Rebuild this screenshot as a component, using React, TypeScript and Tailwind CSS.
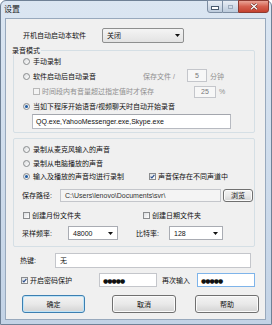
import React from "react";

const Radio = ({ checked = false }: { checked?: boolean }) => (
  <span className="w-[7px] h-[7px] shrink-0 rounded-full border border-[#8a8c8e] bg-gradient-to-br from-[#d9dbdd] to-[#ffffff] flex items-center justify-center">
    {checked && <span className="w-[3px] h-[3px] rounded-full bg-[#1d5aa3]" />}
  </span>
);

const Check = ({ checked = false, disabled = false }: { checked?: boolean; disabled?: boolean }) => (
  <span
    className={`w-[7px] h-[7px] shrink-0 border ${disabled ? "border-[#b9b9b9] bg-[#f4f4f4]" : "border-[#8a8c8e] bg-gradient-to-br from-[#dcdee0] to-[#ffffff]"} flex items-center justify-center`}
  >
    {checked && (
      <svg width="5" height="5" viewBox="0 0 5 5">
        <path d="M0.6 2.6 L1.9 3.9 L4.4 0.8" fill="none" stroke="#2c4f8c" strokeWidth="1.2" />
      </svg>
    )}
  </span>
);

const Arrow = () => (
  <svg width="5" height="3" viewBox="0 0 5 3" className="shrink-0">
    <path d="M0 0 H5 L2.5 3 Z" fill="#111" />
  </svg>
);

const Btn = ({ label, w, primary = false, h = "h-[18px]" }: { label: string; w: string; primary?: boolean; h?: string }) => (
  <div
    className={`${w} ${h} shrink-0 rounded-[3px] border ${primary ? "border-[#3c7fb1] shadow-[inset_0_0_0_1px_#bfe4f8]" : "border-[#707070] shadow-[inset_0_0_0_1px_#fbfbfb]"} bg-gradient-to-b from-[#f3f3f3] via-[#e9e9e9] to-[#d3d3d3] flex items-center justify-center`}
  >
    {label}
  </div>
);

export default function App() {
  return (
    <div className="w-[272px] h-[325px] font-['Liberation_Sans','Noto_Sans_CJK_SC',sans-serif] text-[7px] leading-[9px] text-[#111]">
      <div className="w-[272px] h-[325px] rounded-t-[6px] border border-[#6f8196] bg-gradient-to-b from-[#dbe6f2] to-[#c3d3e6] flex flex-col">
        {/* title bar */}
        <div className="h-[17px] flex items-start shrink-0">
          <span className="pl-[3px] pt-[4px] text-[8px] leading-[9px] text-[#1b1b1b]">设置</span>
          <div className="ml-auto mr-[2px] -mt-[1px] flex h-[13px]">
            <div className="w-[16px] h-[13px] rounded-bl-[3px] border border-[#7d8ea3] bg-gradient-to-b from-[#e9eef5] to-[#bccbdc] flex items-center justify-center">
              <span className="mt-[2px] w-[6px] h-[2px] bg-white border border-[#4a5a6e] box-content" />
            </div>
            <div className="w-[15px] h-[13px] border-y border-[#7d8ea3] bg-gradient-to-b from-[#e9eef5] to-[#bccbdc] flex items-center justify-center">
              <span className="w-[5px] h-[4px] border border-[#9eacbd]" />
            </div>
            <div className="w-[31px] h-[13px] rounded-br-[3px] border border-[#8d3b32] bg-gradient-to-b from-[#e9a497] via-[#d5604f] to-[#c4412f] flex items-center justify-center">
              <svg width="8" height="7" viewBox="0 0 8 7">
                <path d="M1 0.8 L7 6.2 M7 0.8 L1 6.2" stroke="#5c1f18" strokeWidth="2.4" />
                <path d="M1 0.8 L7 6.2 M7 0.8 L1 6.2" stroke="#ffffff" strokeWidth="1.4" />
              </svg>
            </div>
          </div>
        </div>

        {/* client */}
        <div className="ml-[4px] w-[261px] h-[302px] border border-[#98a9bd] bg-[#f0f0f0] flex flex-col">
          {/* row 1 */}
          <div className="mt-[9px] h-[15px] flex items-center pl-[17px]">
            <span className="w-[79px]">开机自动启动本软件</span>
            <div className="w-[82px] h-[15px] rounded-[2px] border border-[#8e8f8f] bg-gradient-to-b from-[#f4f4f4] to-[#e3e3e3] flex items-center pl-[4px] pr-[3px]">
              <span className="flex-1">关闭</span>
              <Arrow />
            </div>
          </div>

          {/* group 1 */}
          <div className="relative mt-[7px] ml-[7px] w-[242px] h-[83px] rounded-[2px] border border-[#d5dfe5] flex flex-col pt-[3px]">
            <span className="absolute left-[-2px] -top-[5px] bg-[#f0f0f0] pr-[1px]">录音模式</span>
            <div className="h-[15px] flex items-center pl-[9px] gap-[3px]">
              <Radio />
              <span>手动录制</span>
            </div>
            <div className="h-[15px] flex items-center pl-[9px]">
              <Radio />
              <span className="ml-[3px] w-[110px]">软件启动后自动录音</span>
              <span className="w-[44px] text-[#8f8f8f]">保存文件 /</span>
              <div className="w-[20px] h-[13px] -mt-[2px] border border-[#c4c6cb] bg-[#f7f7f7] text-[#777] flex items-center justify-center">5</div>
              <span className="ml-[3px] text-[#8f8f8f]">分钟</span>
            </div>
            <div className="h-[15px] flex items-center pl-[19px]">
              <Check disabled />
              <span className="ml-[2px] w-[152px] text-[#8f8f8f]">时间段内有音量超过指定值时才保存</span>
              <div className="w-[22px] h-[12px] border border-[#c4c6cb] bg-[#f7f7f7] text-[#777] flex items-center justify-center">25</div>
              <span className="ml-[3px] text-[#8f8f8f]">%</span>
            </div>
            <div className="h-[15px] flex items-center pl-[9px] gap-[3px]">
              <Radio checked />
              <span>当如下程序开始语音/视频聊天时自动开始录音</span>
            </div>
            <div className="ml-[18px] w-[199px] h-[15px] border border-[#b7bac1] border-t-[#a3a6ad] bg-white flex items-center pl-[3px]">
              QQ.exe,YahooMessenger.exe,Skype.exe
            </div>
          </div>

          {/* group 2 */}
          <div className="mt-[5px] ml-[7px] w-[242px] h-[109px] rounded-[2px] border border-[#d5dfe5] flex flex-col pt-[3px]">
            <div className="h-[14px] flex items-center pl-[9px] gap-[3px]">
              <Radio />
              <span>录制从麦克风输入的声音</span>
            </div>
            <div className="h-[14px] flex items-center pl-[9px] gap-[3px]">
              <Radio />
              <span>录制从电脑播放的声音</span>
            </div>
            <div className="h-[13px] flex items-center pl-[9px]">
              <Radio checked />
              <span className="ml-[3px] w-[116px]">输入及播放的声音均进行录制</span>
              <Check checked />
              <span className="ml-[2px]">声音保存在不同声道中</span>
            </div>
            <div className="mt-[6px] h-[13px] flex items-center pl-[8px]">
              <span className="w-[38px]">保存路径:</span>
              <div className="w-[161px] h-[13px] border border-[#c4c6cb] bg-[#f4f4f4] flex items-center pl-[4px] text-[#333]">
                C:\Users\lenovo\Documents\svr\
              </div>
              <div className="ml-[2px]">
                <Btn label="浏览" w="w-[30px]" h="h-[13px]" />
              </div>
            </div>
            <div className="mt-[6px] h-[14px] flex items-center pl-[9px]">
              <Check />
              <span className="ml-[2px] w-[111px]">创建月份文件夹</span>
              <Check />
              <span className="ml-[2px]">创建日期文件夹</span>
            </div>
            <div className="mt-[4px] h-[14px] flex items-center pl-[8px]">
              <span className="w-[46px]">采样频率:</span>
              <div className="w-[50px] h-[14px] border border-[#a9acb3] bg-white flex items-center pl-[4px] pr-[4px]">
                <span className="flex-1">48000</span>
                <Arrow />
              </div>
              <span className="ml-[18px] w-[33px]">比特率:</span>
              <div className="w-[54px] h-[14px] border border-[#a9acb3] bg-white flex items-center pl-[4px] pr-[4px]">
                <span className="flex-1">128</span>
                <Arrow />
              </div>
            </div>
          </div>

          {/* hotkey */}
          <div className="mt-[6px] h-[15px] flex items-center pl-[14px]">
            <span className="w-[35px]">热键:</span>
            <div className="w-[196px] h-[15px] border border-[#c4c6cb] bg-white flex items-center pl-[4px]">无</div>
          </div>

          {/* password */}
          <div className="mt-[5px] h-[14px] flex items-center pl-[15px]">
            <Check checked />
            <span className="ml-[2px] w-[69px]">开启密码保护</span>
            <div className="w-[58px] h-[14px] border border-[#c4c6cb] bg-white flex items-center pl-[3px] text-[6px] font-['DejaVu_Sans',sans-serif] tracking-[-1px]">
              ●●●●●
            </div>
            <span className="ml-[5px] w-[35px]">再次输入</span>
            <div className="w-[58px] h-[14px] border border-[#7eb4ea] bg-white flex items-center pl-[3px] text-[6px] font-['DejaVu_Sans',sans-serif] tracking-[-1px]">
              ●●●●●
            </div>
          </div>

          {/* buttons */}
          <div className="mt-[8px] flex items-center pl-[16px]">
            <Btn label="确定" w="w-[63px]" primary />
            <div className="ml-[27px]">
              <Btn label="取消" w="w-[64px]" />
            </div>
            <div className="ml-[19px]">
              <Btn label="帮助" w="w-[64px]" />
            </div>
          </div>
        </div>
      </div>
    </div>
  );
}
